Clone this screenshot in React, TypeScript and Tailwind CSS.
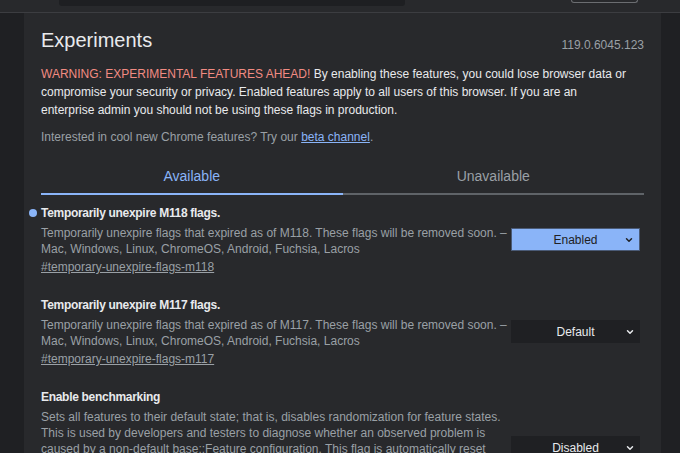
import { ChevronDown } from 'lucide-react'

type Flag = {
  title: string
  desc: string[]
  link?: string
  value: string
  active?: boolean
}

const flags: Flag[] = [
  {
    title: 'Temporarily unexpire M118 flags.',
    desc: [
      'Temporarily unexpire flags that expired as of M118. These flags will be removed soon. –',
      'Mac, Windows, Linux, ChromeOS, Android, Fuchsia, Lacros',
    ],
    link: '#temporary-unexpire-flags-m118',
    value: 'Enabled',
    active: true,
  },
  {
    title: 'Temporarily unexpire M117 flags.',
    desc: [
      'Temporarily unexpire flags that expired as of M117. These flags will be removed soon. –',
      'Mac, Windows, Linux, ChromeOS, Android, Fuchsia, Lacros',
    ],
    link: '#temporary-unexpire-flags-m117',
    value: 'Default',
  },
  {
    title: 'Enable benchmarking',
    desc: [
      'Sets all features to their default state; that is, disables randomization for feature states.',
      'This is used by developers and testers to diagnose whether an observed problem is',
      'caused by a non-default base::Feature configuration. This flag is automatically reset',
      'after 3 restarts and will be off from the 4th restart. On the restart after the flag has',
      'been reset, the flag will be off. – Mac, Windows, Linux, ChromeOS, Android',
    ],
    link: '#enable-benchmarking',
    value: 'Disabled',
  },
]

function FlagRow({ flag }: { flag: Flag }) {
  return (
    <div className="flex items-center">
      <div className="w-[462px] shrink-0">
        <div className="relative h-[18px] text-[12px] leading-[18px] font-bold tracking-[-0.3px] text-[#e8eaed]">
          {flag.active && (
            <span className="absolute -left-[12px] top-[5px] h-[8px] w-[8px] rounded-full bg-[#8ab4f8]" />
          )}
          {flag.title}
        </div>
        <div className="mt-[3px] text-[12px] leading-[16px] text-[#9aa0a6] whitespace-nowrap">
          {flag.desc.map((d) => (
            <div key={d}>{d}</div>
          ))}
        </div>
        {flag.link && (
          <div className="mt-[2px] text-[12px] leading-[16px] text-[#9aa0a6] underline">{flag.link}</div>
        )}
      </div>
      <div className="ml-auto mr-[4px]">
        <div
          className={
            flag.active
              ? 'relative flex h-[23px] w-[129px] items-center justify-center border border-[#4a5a76] bg-[#8ab4f8] text-[12px] text-[#202124]'
              : 'relative flex h-[23px] w-[129px] items-center justify-center bg-[#1f2023] text-[12px] text-[#e8eaed]'
          }
        >
          {flag.value}
          <ChevronDown className="absolute right-[5px] h-[10px] w-[10px]" strokeWidth={3.5} />
        </div>
      </div>
    </div>
  )
}

export default function App() {
  return (
    <div
      className="h-[453px] w-[680px] overflow-hidden bg-[#1f2023]"
      style={{ fontFamily: '"Liberation Sans", Arial, sans-serif' }}
    >
      {/* search strip */}
      <div className="flex h-[13px] border-b border-[#3c3d41] bg-[#28292c]">
        <div className="ml-[59px] h-[6px] w-[346px] rounded-b-[3px] bg-[#1e1f22]" />
        <div className="ml-[166px] h-[3px] w-[67px] rounded-b-[3px] border-x border-b border-[#6b6d71]" />
      </div>

      <div className="flex">
        <div className="w-[24px] shrink-0" />
        <div className="h-[440px] w-[637px] bg-[#28292c] px-[17px] pt-[15px]">
          <div className="flex items-end justify-between">
            <h1 className="text-[20px] leading-[24px] text-[#e8eaed]">Experiments</h1>
            <span className="mb-[-2px] text-[12px] text-[#9aa0a6]">119.0.6045.123</span>
          </div>

          <p className="mt-[13px] text-[12px] leading-[18px] text-[#e8eaed] whitespace-nowrap">
            <span className="text-[#f28b82]">WARNING: EXPERIMENTAL FEATURES AHEAD!</span> By enabling these
            features, you could lose browser data or
            <br />
            compromise your security or privacy. Enabled features apply to all users of this browser. If you
            are an
            <br />
            enterprise admin you should not be using these flags in production.
          </p>

          <p className="mt-[9px] text-[12px] leading-[18px] text-[#9aa0a6]">
            Interested in cool new Chrome features? Try our{' '}
            <span className="text-[#8ab4f8] underline">beta channel</span>.
          </p>

          <div className="mt-[21px] flex">
            <div className="flex-1 border-b-2 border-[#8ab4f8] pb-[8px] text-center text-[14px] leading-[18px] text-[#8ab4f8]">
              Available
            </div>
            <div className="flex-1 border-b-2 border-[#5f6368] pb-[8px] text-center text-[14px] leading-[18px] text-[#9aa0a6]">
              Unavailable
            </div>
          </div>

          <div className="mt-[9px] flex flex-col gap-[21px]">
            {flags.map((f) => (
              <FlagRow key={f.title} flag={f} />
            ))}
          </div>
        </div>
        <div className="flex-1" />
      </div>
    </div>
  )
}
